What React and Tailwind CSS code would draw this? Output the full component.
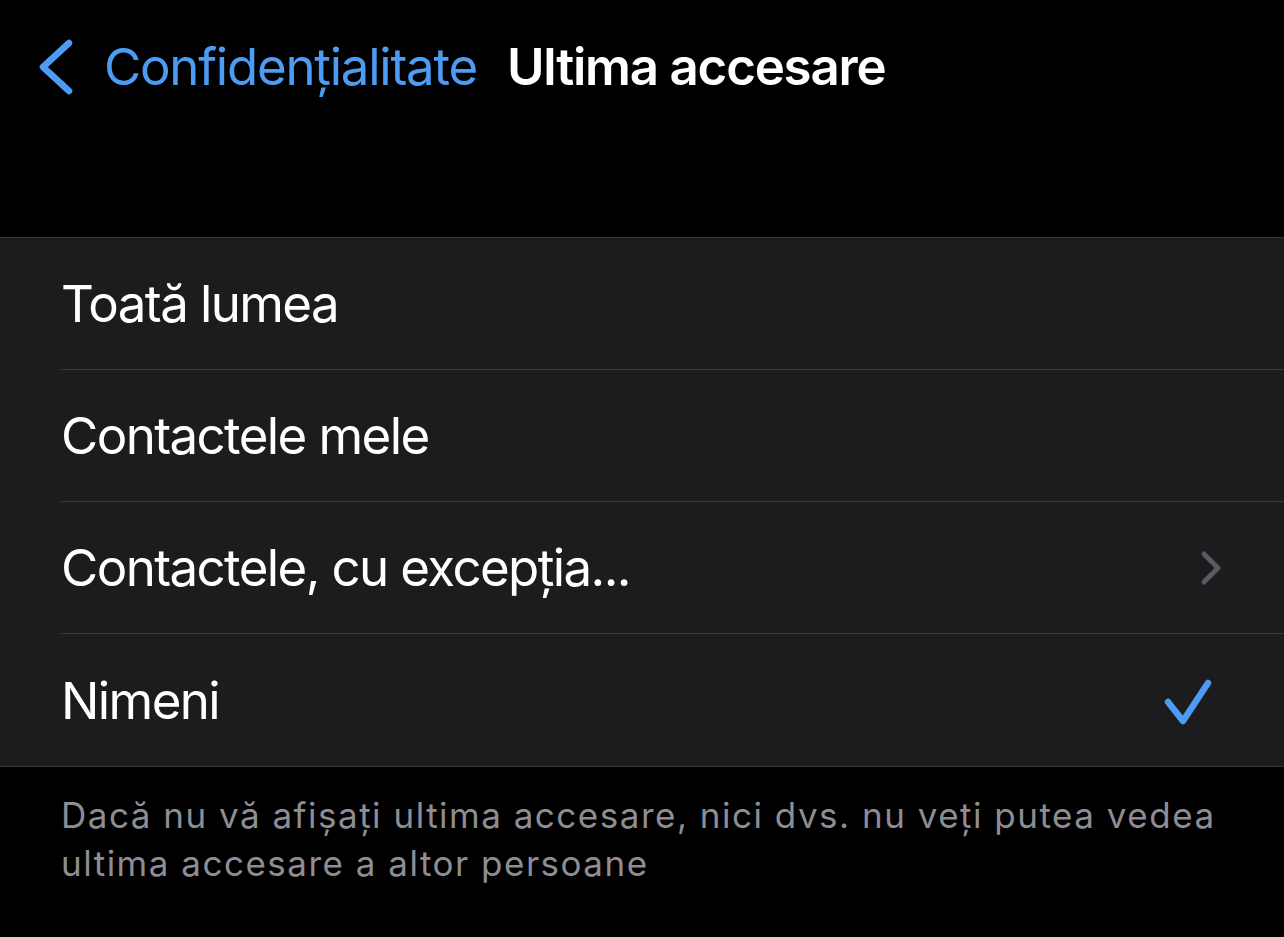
import React from "react";

const rows = [
  { label: "Toată lumea" },
  { label: "Contactele mele" },
  { label: "Contactele, cu excepția...", chevron: true },
  { label: "Nimeni", check: true },
];

export default function App() {
  return (
    <div
      className="w-[1284px] h-[937px] bg-black overflow-hidden"
      style={{ fontFamily: "Inter, 'Noto Sans', sans-serif" }}
    >
      <div className="h-[133px] flex items-center">
        <svg width="40" height="60" viewBox="0 0 40 60" className="ml-[36px] shrink-0">
          <polyline
            points="33,6 7,30 33,54"
            fill="none"
            stroke="#4d9cf3"
            strokeWidth="6.5"
            strokeLinecap="round"
            strokeLinejoin="round"
          />
        </svg>
        <span className="ml-[28px] text-[51px] leading-none text-[#4d9cf3] tracking-[-1.25px]">
          Confidențialitate
        </span>
        <span className="ml-[30px] text-[51px] leading-none font-semibold text-white tracking-[-1.2px]">
          Ultima accesare
        </span>
      </div>
      <div className="h-[104px]" />
      <div className="bg-[#1c1c1e] border-y border-[#38383a]">
        {rows.map((r, i) => (
          <div key={i} className="pl-[61px]">
            <div
              className={
                "h-[132px] flex items-center justify-between pr-[60px] " +
                (i < rows.length - 1 ? "border-b border-[#38383a]" : "")
              }
            >
              <span className="text-[51px] leading-none text-white tracking-[-1.6px]">
                {r.label}
              </span>
              {r.chevron && (
                <svg width="30" height="40" viewBox="0 0 30 40" className="mr-[1px]">
                  <polyline
                    points="11,6 25,20 11,34"
                    fill="none"
                    stroke="#5b5b5f"
                    strokeWidth="5"
                    strokeLinecap="round"
                    strokeLinejoin="round"
                  />
                </svg>
              )}
              {r.check && (
                <svg width="52" height="52" viewBox="0 0 52 52" className="mr-[12px]">
                  <polyline
                    points="8,28 23,47 48,9"
                    fill="none"
                    stroke="#4d9cf3"
                    strokeWidth="6.5"
                    strokeLinecap="round"
                    strokeLinejoin="round"
                  />
                </svg>
              )}
            </div>
          </div>
        ))}
      </div>
      <div className="px-[61px] pt-[24px] text-[35px] leading-[48px] text-[#8d8d93] tracking-[1.5px]">
        Dacă nu vă afișați ultima accesare, nici dvs. nu veți putea vedea ultima accesare a altor persoane
      </div>
    </div>
  );
}
